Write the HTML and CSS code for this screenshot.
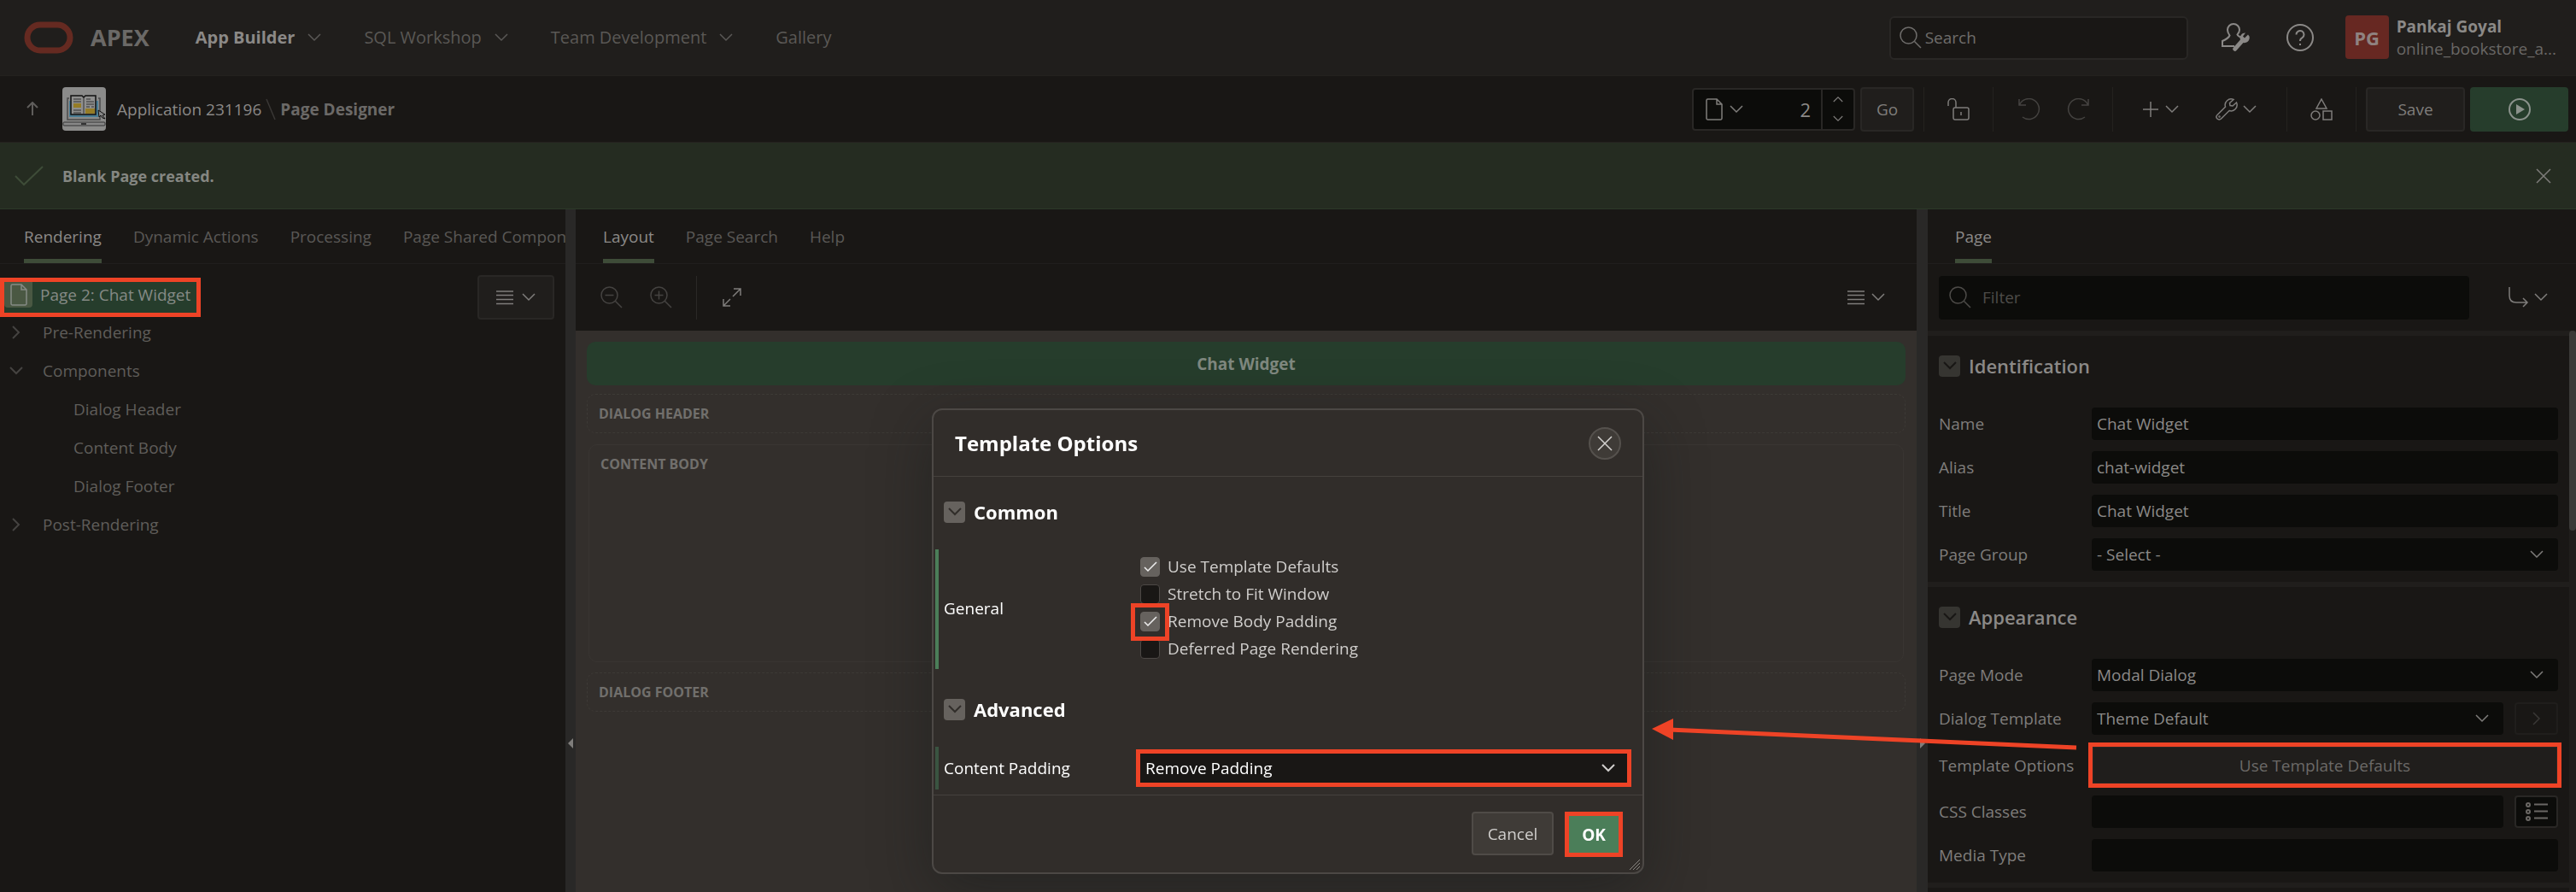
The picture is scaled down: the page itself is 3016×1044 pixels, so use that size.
FILE: index.html
```html
<!DOCTYPE html>
<html lang="en">
<head>
<meta charset="utf-8">
<title>Page Designer</title>
<link rel="stylesheet" href="styles.css">
</head>
<body>
<svg class="sprite" aria-hidden="true">
  <symbol id="chev" viewBox="0 0 16 10"><path d="M1 1l7 7 7-7"/></symbol>
  <symbol id="chev-right" viewBox="0 0 10 16"><path d="M1 1l7 7-7 7"/></symbol>
  <symbol id="search" viewBox="0 0 26 26"><circle cx="10.500" cy="10.500" r="9.500"/><path d="M17.500 17.500l7.500 7.500"/></symbol>
  <symbol id="zoom-out" viewBox="0 0 26 26"><circle cx="10.500" cy="10.500" r="9.500"/><path d="M17.500 17.500l7.500 7.500M5.500 10.500h10"/></symbol>
  <symbol id="zoom-in" viewBox="0 0 26 26"><circle cx="10.500" cy="10.500" r="9.500"/><path d="M17.500 17.500l7.500 7.500M5.500 10.500h10M10.500 5.500v10"/></symbol>
  <symbol id="expand" viewBox="0 0 24 24"><path d="M13 11L22 2M14 2h8v8M10 14L2 22M2 14v8h8"/></symbol>
  <symbol id="doc" viewBox="0 0 20 26"><path d="M2.500 1H13l6 6v16.500a1.500 1.500 0 0 1-1.500 1.500h-15A1.500 1.500 0 0 1 1 23.500v-21A1.500 1.500 0 0 1 2.500 1zM13 1v6h6"/></symbol>
  <symbol id="lines" viewBox="0 0 20 18"><path d="M0 2h20M0 6.500h20M0 11.500h20M0 16.500h20"/></symbol>
  <symbol id="unlock" viewBox="0 0 26 26"><path d="M1 9V5a4 4 0 0 1 9 0v6"/><rect x="7" y="11" width="18" height="14" rx="2"/><path d="M16 16v4"/></symbol>
  <symbol id="undo" viewBox="0 0 26 26"><path d="M1 1v7h8M1.500 7.500A12 12 0 1 1 5 22"/></symbol>
  <symbol id="redo" viewBox="0 0 26 26"><path d="M25 1v7h-8M24.500 7.500A12 12 0 1 0 21 22"/></symbol>
  <symbol id="plus" viewBox="0 0 18 18"><path d="M9 0v18M0 9h18"/></symbol>
  <symbol id="wrench" viewBox="0 0 26 26"><path d="M21 1.500a7 7 0 0 0-9.500 8.500L2 19.500a3 3 0 0 0 4.500 4.500L16 14.500A7 7 0 0 0 24.500 5L20 9l-3-.500-.500-3z"/><circle cx="4.500" cy="21.500" r=".500"/></symbol>
  <symbol id="shapes" viewBox="0 0 26 26"><path d="M13 1l6 11H7z"/><circle cx="6" cy="20" r="5"/><rect x="15" y="15" width="10" height="10"/></symbol>
  <symbol id="play" viewBox="0 0 26 26"><circle cx="13" cy="13" r="12"/><path class="fill" d="M9 7v12l10-6z"/></symbol>
  <symbol id="close" viewBox="0 0 18 18"><path d="M1 1l16 16M17 1L1 17"/></symbol>
  <symbol id="goto" viewBox="0 0 24 24"><path d="M1 0v10q0 8 8 8h13M17 13l5 5-5 5"/></symbol>
  <symbol id="help" viewBox="0 0 32 32"><circle cx="16" cy="16" r="15"/><path d="M11.500 12.500a4.500 4.500 0 1 1 7 3.700Q16 17.500 16 20M16 23v2"/></symbol>
  <symbol id="admin" viewBox="0 0 34 34"><path d="M24 17q-4-2-4.500-3.500Q22 11 22 8a7 7 0 0 0-14 0q0 3 2.500 6.500Q9 18 2 21v6h14"/><path class="fill" d="M32 13.500l-4 4-2-2 3-4a6 6 0 0 0-6 8l-8 9a2.300 2.300 0 0 0 3.500 3.500l8-9a6 6 0 0 0 7-7.500z"/></symbol>
  <symbol id="list" viewBox="0 0 26 24"><circle cx="3" cy="4" r="2"/><circle cx="3" cy="12" r="2"/><circle cx="3" cy="20" r="2"/><path d="M10 3.500h16M10 11.500h16M10 19.500h16"/></symbol>
</svg>

<div class="app">
  <header class="topbar">
    <svg class="logo" viewBox="0 0 58 38"><rect x="4" y="4" width="50" height="30" rx="15"/></svg>
    <span class="brand">APEX</span>
    <nav class="nav">
      <a href="#" class="current">App Builder <svg class="ic chev"><use href="#chev"/></svg></a>
      <a href="#">SQL Workshop <svg class="ic chev"><use href="#chev"/></svg></a>
      <a href="#">Team Development <svg class="ic chev"><use href="#chev"/></svg></a>
      <a href="#">Gallery</a>
    </nav>
    <label class="search"><svg class="ic i26"><use href="#search"/></svg><input type="text" placeholder="Search" aria-label="Search"></label>
    <button class="plain admin" aria-label="Administration"><svg class="ic i34"><use href="#admin"/></svg></button>
    <button class="plain help" aria-label="Help"><svg class="ic i32"><use href="#help"/></svg></button>
    <div class="user">
      <span class="avatar">PG</span>
      <div class="who"><b>Pankaj Goyal</b><span>online_bookstore_a...</span></div>
    </div>
  </header>

  <div class="subbar">
    <a href="#" class="up" aria-label="Up"><svg class="ic" viewBox="0 0 14 17"><path d="M7 16V1M1 7l6-6 6 6"/></svg></a>
    <svg class="appicon" viewBox="0 0 51 51">
      <rect width="51" height="51" rx="4" fill="#8b8b8a"/>
      <path d="M8 13H6v25h38V13h-2" fill="none" stroke="#4b4b4b" stroke-width="1.500"/>
      <path d="M8 16h34v19H8z" fill="#4a7c94"/>
      <path d="M10 10h13l2 2 2-2h12v22H10z" fill="#8f8f8e" stroke="#111" stroke-width="1.500"/>
      <path d="M25 12v20M13 14h9M13 17h9M13 27h9M13 30h9M28 14h5M28 17h9M28 20h9M28 23h4M34 23h3" stroke="#333" fill="none"/>
      <path d="M13 19h9v5h-9zM27 25h11v6H27z" fill="#957c26"/>
      <path d="M42 27l8 5-3 1 3 4-3-1-2-3-2 2z" fill="#888" stroke="#111"/>
      <rect x="1" y="41" width="49" height="4" rx="1" fill="#888" stroke="#333"/>
      <path d="M22 43h6" stroke="#333" stroke-width="2"/>
    </svg>
    <a href="#" class="crumb">Application 231196</a>
    <svg class="ic slash" viewBox="0 0 12 26"><path d="M1 1l10 24"/></svg>
    <b class="crumb-current">Page Designer</b>

    <div class="tools">
      <div class="pagefield">
        <button class="plain picker" aria-label="Page"><svg class="ic doc"><use href="#doc"/></svg><svg class="ic chev"><use href="#chev"/></svg></button>
        <input type="text" value="2" aria-label="Page number">
        <span class="spin"><svg class="ic flip"><use href="#chev"/></svg><svg class="ic"><use href="#chev"/></svg></span>
      </div>
      <button class="btn go">Go</button>
      <div class="group g1"><button class="plain" aria-label="Lock"><svg class="ic i26"><use href="#unlock"/></svg></button></div>
      <div class="group g2"><button class="plain dim" aria-label="Undo"><svg class="ic i26"><use href="#undo"/></svg></button><button class="plain dim" aria-label="Redo"><svg class="ic i26"><use href="#redo"/></svg></button></div>
      <div class="group g3"><button class="plain" aria-label="Create"><svg class="ic i18"><use href="#plus"/></svg><svg class="ic chev"><use href="#chev"/></svg></button><button class="plain tight" aria-label="Utilities"><svg class="ic i26"><use href="#wrench"/></svg><svg class="ic chev"><use href="#chev"/></svg></button></div>
      <div class="group g1"><button class="plain" aria-label="Shared Components"><svg class="ic i26"><use href="#shapes"/></svg></button></div>
      <div class="group g4"><button class="btn save">Save</button><button class="btn run" aria-label="Run"><svg class="ic i26"><use href="#play"/></svg></button></div>
    </div>
  </div>

  <div class="alert" role="status">
    <svg class="ic tick" viewBox="0 0 34 24"><path d="M1 12l10 10L33 1"/></svg>
    <b>Blank Page created.</b>
    <button class="plain" aria-label="Close"><svg class="ic i18"><use href="#close"/></svg></button>
  </div>

  <main class="panes">
    <section class="pane">
      <div class="tabs"><a href="#" class="on">Rendering</a><a href="#">Dynamic Actions</a><a href="#">Processing</a><a href="#">Page Shared Components</a></div>
      <div class="treewrap">
        <ul class="tree">
          <li class="root"><a href="#" class="marked"><span class="pg"><svg class="ic"><use href="#doc"/></svg></span>Page 2: Chat Widget</a></li>
          <li><span class="tw"><svg class="ic chev-r"><use href="#chev-right"/></svg></span>Pre-Rendering</li>
          <li><span class="tw"><svg class="ic chev"><use href="#chev"/></svg></span>Components</li>
          <li class="leaf">Dialog Header</li>
          <li class="leaf">Content Body</li>
          <li class="leaf">Dialog Footer</li>
          <li><span class="tw"><svg class="ic chev-r"><use href="#chev-right"/></svg></span>Post-Rendering</li>
        </ul>
        <button class="btn menu" aria-label="Menu"><svg class="ic lines"><use href="#lines"/></svg><svg class="ic chev"><use href="#chev"/></svg></button>
      </div>
    </section>

    <div class="split"><svg viewBox="0 0 6 12"><path d="M6 0v12L0 6z"/></svg></div>

    <section class="pane">
      <div class="tabs tabs-mid"><a href="#" class="on">Layout</a><a href="#">Page Search</a><a href="#">Help</a></div>
      <div class="bar">
        <button class="plain faint" aria-label="Zoom out"><svg class="ic i26"><use href="#zoom-out"/></svg></button>
        <button class="plain faint" aria-label="Zoom in"><svg class="ic i26"><use href="#zoom-in"/></svg></button>
        <span class="rule"></span>
        <button class="plain" aria-label="Expand"><svg class="ic i24"><use href="#expand"/></svg></button>
        <button class="plain last" aria-label="Menu"><svg class="ic lines"><use href="#lines"/></svg><svg class="ic chev"><use href="#chev"/></svg></button>
      </div>
      <div class="canvas">
        <div class="ctitle">Chat Widget</div>
        <div class="slot">Dialog Header</div>
        <div class="slot tall">Content Body</div>
        <div class="slot foot">Dialog Footer</div>
      </div>
    </section>

    <div class="split"><svg viewBox="0 0 6 12"><path d="M0 0v12l6-6z"/></svg></div>

    <section class="pane">
      <div class="tabs tabs-right"><a href="#" class="on">Page</a></div>
      <div class="bar bar-right">
        <label class="filter"><svg class="ic i26"><use href="#search"/></svg><input type="text" placeholder="Filter" aria-label="Filter"></label>
        <button class="plain last tight" aria-label="Go to group"><svg class="ic i24"><use href="#goto"/></svg><svg class="ic chev"><use href="#chev"/></svg></button>
      </div>
      <div class="propwrap">
        <div class="props">
          <h2><span class="box"><svg class="ic chev"><use href="#chev"/></svg></span>Identification</h2>
          <div class="row"><label for="n">Name</label><input id="n" type="text" value="Chat Widget"></div>
          <div class="row"><label for="a">Alias</label><input id="a" type="text" value="chat-widget"></div>
          <div class="row"><label for="t">Title</label><input id="t" type="text" value="Chat Widget"></div>
          <div class="row"><label for="pg">Page Group</label><span class="sel"><select id="pg"><option>- Select -</option></select><svg class="ic chev"><use href="#chev"/></svg></span></div>
          <hr>
          <h2><span class="box"><svg class="ic chev"><use href="#chev"/></svg></span>Appearance</h2>
          <div class="row"><label for="pm">Page Mode</label><span class="sel"><select id="pm"><option>Modal Dialog</option></select><svg class="ic chev"><use href="#chev"/></svg></span></div>
          <div class="row"><label for="dt">Dialog Template</label><span class="sel"><select id="dt"><option>Theme Default</option></select><svg class="ic chev"><use href="#chev"/></svg></span><button class="side" aria-label="Go to template"><svg class="ic chev-r"><use href="#chev-right"/></svg></button></div>
          <div class="row"><label for="to">Template Options</label><button id="to" class="btn opts marked">Use Template Defaults</button></div>
          <div class="row"><label for="cc">CSS Classes</label><input id="cc" type="text"><button class="side strong" aria-label="Pick classes"><svg class="ic list"><use href="#list"/></svg></button></div>
          <div class="row"><label for="mt">Media Type</label><input id="mt" type="text"></div>
          <hr>
        </div>
        <div class="scroll"><span></span></div>
      </div>
    </section>
  </main>
</div>

<div class="overlay">
  <div class="dialog" role="dialog" aria-labelledby="dlg">
    <div class="dhead"><h1 id="dlg">Template Options</h1><button class="x" aria-label="Close"><svg class="ic i18"><use href="#close"/></svg></button></div>
    <div class="dbody">
      <h2><span class="box"><svg class="ic chev"><use href="#chev"/></svg></span>Common</h2>
      <div class="field general">
        <span class="flabel">General</span>
        <div class="checks">
          <label><input type="checkbox" checked>Use Template Defaults</label>
          <label><input type="checkbox">Stretch to Fit Window</label>
          <label class="hot"><input type="checkbox" checked>Remove Body Padding</label>
          <label><input type="checkbox">Deferred Page Rendering</label>
        </div>
      </div>
      <h2><span class="box"><svg class="ic chev"><use href="#chev"/></svg></span>Advanced</h2>
      <div class="field advanced">
        <label class="flabel" for="cp">Content Padding</label>
        <span class="sel marked"><select id="cp"><option>Remove Padding</option></select><svg class="ic chev"><use href="#chev"/></svg></span>
      </div>
    </div>
    <div class="dfoot"><button class="cancel">Cancel</button><button class="ok marked">OK</button></div>
    <svg class="ic grip" viewBox="0 0 12 12"><path d="M0 12L12 0M4 12l8-8M8 12l4-4"/></svg>
  </div>
</div>

<svg class="arrow" viewBox="0 0 498 37" aria-hidden="true"><path class="shaft" d="M20 13L497 34"/><path class="tip" d="M0 12L25 0v25z"/></svg>
</body>
</html>
```
FILE: styles.css
```css
:root {
  --bg: #191715;
  --raised: #201e1c;
  --field: #0c0c0a;
  --line: #24221f;
  --text: #7f7d7b;
  --muted: #5a5855;
  --green: #263d2c;
  --mark: #ee4326;
}

* { box-sizing: border-box; }

body {
  margin: 0;
  height: 100vh;
  overflow: hidden;
  background: var(--bg);
  color: var(--text);
  font: 19px/26px "Open Sans", "Noto Sans", sans-serif;
}

a { color: inherit; text-decoration: none; }
button, input, select { font: inherit; color: inherit; margin: 0; border: 0; background: none; padding: 0; border-radius: 4px; }
input, select { min-width: 0; width: 100%; }
input::placeholder { color: inherit; opacity: 1; }
select { appearance: none; }
h1, h2 { margin: 0; }

.sprite { position: absolute; width: 0; height: 0; }
.ic { fill: none; stroke: currentColor; stroke-width: 1.500; flex: none; display: block; }
.fill { fill: currentColor; stroke: none; }
.i18 { width: 18px; height: 18px; }
.i24 { width: 24px; height: 24px; }
.i26 { width: 26px; height: 26px; }
.i32 { width: 32px; height: 32px; stroke-width: 2; }
.i34 { width: 34px; height: 34px; stroke-width: 2; }
.chev { width: 16px; height: 10px; }
.chev-r { width: 10px; height: 16px; }
.lines { width: 20px; height: 18px; }
.doc { width: 20px; height: 26px; }
.list { width: 26px; height: 24px; }
.plain { display: flex; align-items: center; gap: 8px; }
.marked { outline: 5px solid var(--mark); }

.btn {
  display: flex;
  align-items: center;
  justify-content: center;
  gap: 10px;
  height: 52px;
  background: var(--raised);
  border: 2px solid #292725;
}

.app { display: flex; flex-direction: column; height: 100%; }

/* top bar */
.topbar {
  display: flex;
  align-items: center;
  height: 89px;
  padding: 0 23px 0 28px;
  background: var(--raised);
  border-bottom: 1px solid var(--line);
  font-size: 20px;
}
.logo { width: 58px; height: 38px; fill: none; stroke: #652a21; stroke-width: 7; }
.brand { margin: 0 54px 0 20px; font-size: 27px; font-weight: 700; color: #6b6967; }
.nav { display: flex; gap: 50px; flex: 1; color: var(--muted); }
.nav a { display: flex; align-items: center; gap: 15px; }
.nav .current { color: #8b8987; font-weight: 700; }
.nav .chev { color: #5a5856; }
.search {
  display: flex;
  align-items: center;
  gap: 4px;
  width: 350px;
  height: 51px;
  padding: 0 10px;
  border: 2px solid #292725;
  border-radius: 6px;
  background: var(--bg);
  font-size: 19px;
  color: #6f6d6b;
}
.admin { margin-left: 38px; color: #8b8987; }
.help { margin: 0 37px 0 43px; color: #8b8987; }
.user { display: flex; gap: 9px; }
.avatar {
  display: grid;
  place-items: center;
  width: 51px;
  height: 51px;
  border-radius: 4px;
  background: #672822;
  color: #8f8280;
  font-size: 22px;
  font-weight: 700;
}
.who { display: flex; flex-direction: column; font-size: 19px; color: #696765; }
.who b { color: #8b8987; font-weight: 700; }

/* second bar */
.subbar {
  display: flex;
  align-items: center;
  height: 78px;
  padding: 0 9px 0 31px;
  border-bottom: 1px solid var(--line);
}
.up svg { width: 14px; height: 17px; stroke-width: 2; }
.up { margin-right: 28px; color: #5f5d5b; }
.appicon { width: 51px; height: 51px; margin-right: 13px; }
.crumb { color: #8b8987; }
.slash { width: 12px; height: 26px; margin: 0 5px; color: #3a3836; }
.crumb-current { color: #6b6967; font-weight: 700; flex: 1; }
.tools { display: flex; align-items: center; height: 52px; }
.pagefield { display: flex; width: 191px; height: 50px; border: 2px solid #292725; border-radius: 4px; background: var(--field); margin-right: 6px; }
.picker { padding-left: 14px; flex: none; }
.pagefield input { text-align: right; padding-right: 12px; font-size: 22px; color: #8b8987; }
.spin { display: flex; flex-direction: column; justify-content: space-around; align-items: center; flex: none; width: 38px; border-left: 2px solid #292725; }
.spin svg { width: 12px; height: 8px; }
.flip { transform: rotate(180deg); }
.go { width: 63px; margin-right: 11px; }
.group { display: flex; align-items: center; height: 52px; border-left: 1px solid #24221f; }
.g1 { padding: 0 27px; }
.g2 { padding: 0 27px 0 29px; gap: 31px; }
.g3 { padding: 0 35px; gap: 43px; }
.tight { gap: 6px; }
.g4 { padding-left: 11px; gap: 6px; }
.dim { color: #454341; }
.save { width: 116px; }
.run { width: 115px; background: var(--green); border-color: var(--green); color: #8b928c; }
.run .ic { stroke-width: 2; }

/* success message */
.alert {
  display: flex;
  align-items: center;
  height: 78px;
  padding: 0 29px 0 17px;
  background: #252c21;
  border-bottom: 1px solid #2c3929;
}
.tick { width: 34px; height: 24px; margin-right: 22px; color: #3e4c38; stroke-width: 2; }
.alert b { flex: 1; color: #858782; font-size: 18px; font-weight: 700; }

/* three panes and their splitters */
.panes { flex: 1; min-height: 0; display: grid; grid-template-columns: 662fr 12px 1570fr 13px 759fr; }
.pane { min-width: 0; min-height: 0; overflow: hidden; display: flex; flex-direction: column; }
.split { display: flex; align-items: center; justify-content: center; background: #292827; fill: #7f7d7b; }
.split svg { width: 6px; height: 12px; margin-top: 450px; }

.tabs {
  display: flex;
  gap: 37px;
  flex: none;
  height: 64px;
  padding: 0 28px;
  border-bottom: 1px solid #201e1d;
  color: var(--muted);
  white-space: nowrap;
}
.tabs a { display: flex; align-items: center; border: 0 solid transparent; border-width: 5px 0; }
.tabs .on { color: #8b8987; border-bottom-color: #3e4c38; }
.tabs-mid, .tabs-right { padding: 0 32px; }

.treewrap { display: flex; justify-content: space-between; align-items: flex-start; padding: 13px 13px 0 0; }
.tree { list-style: none; margin: 0; padding: 0; }
.tree li { display: flex; align-items: center; height: 45px; color: #5f5d5a; }
.tw { width: 38px; display: grid; place-items: center; margin-right: 12px; color: #454341; }
.tw .ic { stroke-width: 2; }
.tree .leaf { padding-left: 86px; }
.tree .root { height: 44px; padding-top: 8px; }
.tree .marked { display: flex; align-items: center; gap: 9px; height: 36px; padding-bottom: 6px; margin-left: 5px; width: 225px; border-radius: 0; background: var(--green); color: #858a85; }
.pg { display: grid; place-items: center; width: 33px; height: 30px; border-radius: 0 0 4px 4px; background: #4a5843; }
.pg svg { width: 20px; height: 26px; }
.menu { width: 90px; }

.bar { display: flex; align-items: center; flex: none; height: 78px; padding: 0 37px 0 29px; }
.faint { color: #454341; margin-right: 32px; }
.faint + .faint { margin-right: 28px; }
.rule { width: 1px; height: 51px; background: #2a2826; margin-right: 29px; }
.last { margin-left: auto; }
.bar-right { padding: 0 33px 0 13px; }
.filter { display: flex; align-items: center; gap: 13px; flex: 1; height: 51px; margin-right: 46px; padding: 0 12px; border-radius: 4px; background: var(--field); color: #4d4b48; }

.canvas { flex: 1; padding: 13px; background: #332f2c; font-size: 16px; font-weight: 700; }
.ctitle { display: grid; place-items: center; height: 51px; border-radius: 10px; background: var(--green); color: #7f887f; font-size: 19px; }
.slot { height: 46px; margin-top: 10px; padding: 9px 13px; border: 1px dashed #3d3a36; border-radius: 10px; text-transform: uppercase; color: #716f6c; }
.tall { height: 255px; margin: 13px 2px 0; border-style: solid; border-color: #393532; }
.foot { margin-top: 12px; }

/* property editor */
.propwrap { display: flex; flex: 1; min-height: 0; border-top: 6px solid var(--raised); }
.props { flex: 1; padding: 0 13px; overflow: hidden; }
.props h2 { margin: 22px 0 36px; font-size: 22px; font-weight: 600; color: #8b8987; }
h2 { display: flex; align-items: center; gap: 10px; height: 26px; }
.box { display: grid; place-items: center; width: 25px; height: 25px; border-radius: 4px; background: #363531; color: var(--bg); }
.box .ic { stroke-width: 2; }
.props hr { height: 6px; border: 0; margin: 0 -13px; background: var(--raised); }
.row { display: flex; gap: 13px; align-items: center; margin-bottom: 13px; }
.row label { flex: none; width: 166px; white-space: nowrap; }
.row input, .row select { color: #8b8987; }
.row input, .row .sel { height: 38px; flex: 1; background: var(--field); }
.row input, select { padding-left: 6px; }
.sel { display: grid; align-items: center; border-radius: 4px; }
.sel select, .sel svg { grid-area: 1 / 1; }
.sel select { height: 100%; }
.sel svg { justify-self: end; margin-right: 17px; pointer-events: none; }
.side { display: grid; place-items: center; flex: none; width: 51px; height: 38px; border: 2px solid var(--raised); color: #3a3836; }
.strong { border-color: #292725; background: var(--field); color: #6a6764; }
.strong .ic { stroke-width: 2; }
.opts { flex: 1; height: 45px; border-radius: 0; outline-offset: -1px; color: #6b6967; }
.scroll { width: 8px; margin-top: -6px; background: var(--raised); }
.scroll span { display: block; height: 234px; border-radius: 4px; background: #3b3a38; }

/* dialog */
.overlay { position: fixed; inset: 0; display: flex; justify-content: center; align-items: flex-start; padding-top: 478px; }
.dialog {
  position: relative;
  width: 834px;
  border: 2px solid #4c4845;
  border-radius: 12px;
  background: #312d2a;
  color: #fff;
  box-shadow: 0 20px 70px rgba(20, 24, 24, .45);
}
.dhead { display: flex; align-items: center; justify-content: space-between; height: 78px; padding: 0 25px; border-bottom: 1px solid #45413d; }
.dhead h1 { font-size: 24px; font-weight: 700; }
.x { display: grid; place-items: center; width: 38px; height: 38px; border: 2px solid #55514d; border-radius: 50%; background: #3f3b37; color: #d5d3d1; }
.dialog h2 { padding-left: 12px; margin: 28px 0 31px; font-size: 22px; font-weight: 700; }
.dialog .box { background: #66625e; color: #312d2a; }
.field { display: flex; align-items: center; margin-left: 2px; border-left: 4px solid #4b7e59; padding-left: 6px; }
.flabel { flex: none; width: 230px; }
.general { height: 140px; margin-bottom: 34px; padding-bottom: 2px; }
.dialog h2 + .advanced { border-color: #3a5441; height: 50px; }
.checks { display: flex; flex-direction: column; gap: 6px; color: #d0cecc; margin-bottom: 2px; }
.checks label { display: flex; align-items: center; gap: 9px; height: 26px; }
.checks input { appearance: none; width: 23px; height: 23px; border: 1px solid #4c4845; background: var(--bg) center / 16px 12px no-repeat; }
.checks input:checked { background-color: #66625e; border-color: #66625e; background-image: url("data:image/svg+xml,%3Csvg xmlns='http://www.w3.org/2000/svg' viewBox='0 0 16 12'%3E%3Cpath d='M1 7l4 4L15 1' fill='none' stroke='%23eee' stroke-width='1.500'/%3E%3C/svg%3E"); }
.checks .hot { position: relative; }
.hot::before { content: ""; position: absolute; z-index: 1; top: -8px; left: -11px; width: 35px; height: 34px; border: 5px solid var(--mark); }
.advanced .sel { flex: 1; height: 34px; margin-right: 18px; background: var(--bg); border-radius: 0; }
.advanced .sel svg { margin-right: 14px; color: #d0cecc; stroke-width: 2; }
.dfoot { display: flex; justify-content: flex-end; gap: 18px; height: 91px; margin-top: 6px; padding: 19px 28px; border-top: 1px solid #45413d; }
.cancel { width: 96px; height: 51px; border: 2px solid #4f4b47; background: #3f3b37; color: #d0cecc; }
.ok { width: 58px; height: 43px; margin-top: 5px; border-radius: 0; background: #4b7e59; font-weight: 700; }
.grip { position: absolute; right: 3px; bottom: 3px; width: 12px; height: 12px; stroke-width: 1; color: #8b8783; }

.arrow { position: absolute; top: 841px; left: 50%; margin-left: 426px; width: 498px; height: 37px; fill: none; stroke: var(--mark); stroke-width: 5; }
.arrow .tip { fill: var(--mark); stroke: none; }
```
